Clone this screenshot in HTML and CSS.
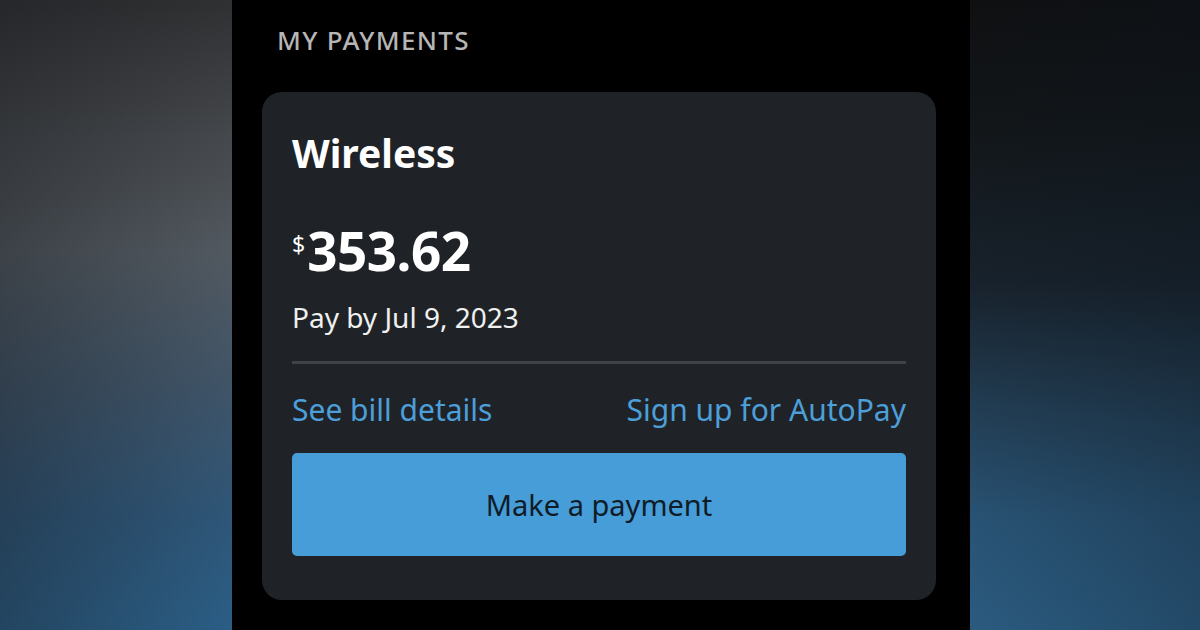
FILE: index.html
```html
<!DOCTYPE html>
<html>
<head>
<meta charset="utf-8">
<link rel="stylesheet" href="styles.css">
</head>
<body>
<div class="page">
  <div class="side side-left"></div>
  <main class="screen">
    <h2 class="section-title">MY PAYMENTS</h2>
    <section class="card">
      <h3 class="card-title">Wireless</h3>
      <div class="amount"><span class="currency">$</span><span class="value">353.62</span></div>
      <p class="due">Pay by Jul 9, 2023</p>
      <hr class="divider">
      <div class="links">
        <a class="link">See bill details</a>
        <a class="link">Sign up for AutoPay</a>
      </div>
      <button class="pay-btn">Make a payment</button>
    </section>
  </main>
  <div class="side side-right"></div>
</div>
</body>
</html>
```

FILE: styles.css
```css
* { box-sizing: border-box; }
html, body { margin: 0; padding: 0; }
body {
  width: 1200px;
  height: 630px;
  overflow: hidden;
  font-family: "Noto Sans", "Open Sans", sans-serif;
  background: #000;
}
.page {
  display: grid;
  grid-template-columns: 232px 738px 230px;
  height: 630px;
}
.side-left {
  background:
    linear-gradient(90deg, rgba(20,22,26,0.35) 0%, rgba(20,22,26,0) 100%),
    linear-gradient(180deg, #2f3032 0%, #45484c 22%, #525960 40%, #3f5468 62%, #2e5678 82%, #2b5e86 100%);
}
.side-right {
  background:
    linear-gradient(270deg, rgba(10,20,30,0.25) 0%, rgba(10,20,30,0) 100%),
    linear-gradient(180deg, #0f1012 0%, #121619 20%, #18222c 45%, #223d53 65%, #285273 82%, #2b5b80 100%);
}
.screen {
  background: #000;
  padding: 27px 34px 0 30px;
}
.section-title {
  margin: 0 0 0 15px;
  font-weight: 500;
  font-size: 26px;
  letter-spacing: 1.3px;
  color: #b6b6b6;
  line-height: 26px;
}
.card {
  margin-top: 39px;
  background: #1f2327;
  border-radius: 20px;
  height: 508px;
  padding: 41px 30px 0 30px;
}
.card-title {
  margin: 0;
  color: #fff;
  font-weight: 700;
  font-size: 39px;
  line-height: 39px;
}
.amount {
  margin-top: 52px;
  display: flex;
  align-items: flex-start;
  color: #fff;
  height: 53px;
}
.currency {
  font-size: 23px;
  line-height: 23px;
  margin-top: 9px;
  margin-right: 2px;
}
.value {
  font-weight: 700;
  font-size: 53px;
  line-height: 53px;
  letter-spacing: -0.5px;
}
.due {
  margin: 26px 0 0 0;
  color: #f0f0f0;
  font-size: 28px;
  line-height: 28px;
}
.divider {
  margin: 30px 0 0 0;
  border: 0;
  height: 3px;
  background: #404245;
}
.links {
  margin-top: 31px;
  display: flex;
  justify-content: space-between;
}
.link {
  color: #4c9fd9;
  font-size: 30px;
  line-height: 30px;
}
.pay-btn {
  display: block;
  width: 100%;
  margin-top: 28px;
  height: 103px;
  border: 0;
  border-radius: 5px;
  background: #479dd7;
  color: #0f1c28;
  font-family: inherit;
  font-size: 29px;
  padding: 0;
}
```
